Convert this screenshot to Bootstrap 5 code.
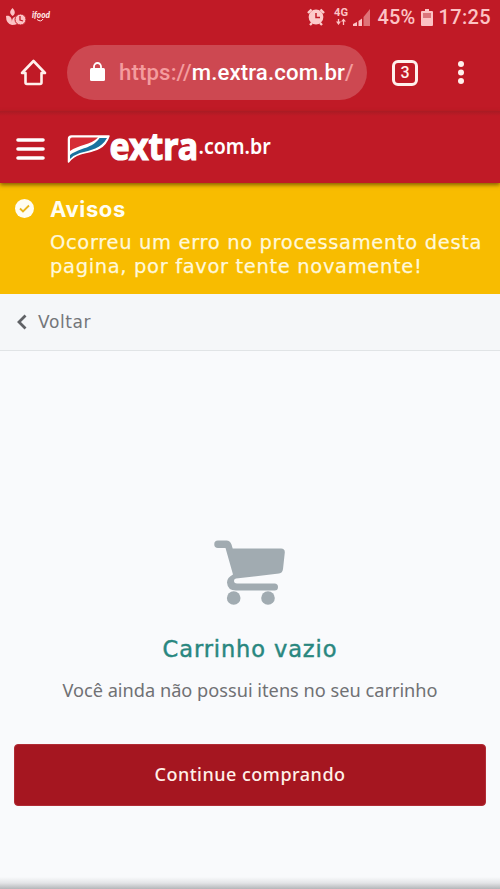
<!DOCTYPE html>
<html lang="pt-BR">
<head>
<meta charset="utf-8">
<meta name="viewport" content="width=device-width, initial-scale=1">
<title>Carrinho - Extra.com.br</title>
<link href="https://cdn.jsdelivr.net/npm/bootstrap@5.3.0/dist/css/bootstrap.min.css" rel="stylesheet">
<style>
  body { height: 889px; overflow: hidden; background: #f9fafc; font-family: Roboto, "Liberation Sans", sans-serif; }
  svg { display: block; flex: none; }
  .status-bar { height: 34px; background: #c01a26; color: #fcc3c4; padding: 0 9px 0 6px; font-size: 20px; line-height: 34px; font-weight: 500; }
  .net-type { margin-left: 8px; }
  .pct { margin-left: 6px; letter-spacing: .2px; }
  .batt { margin: 0 6px 0 5px; }
  .clock { letter-spacing: .35px; }
  .browser-bar { height: 77px; background: #c01a26; padding: 0 30px 0 20px; }
  .address { width: 300px; height: 55px; background: #cd4851; color: #fff; font-size: 22.2px; font-weight: 500; white-space: nowrap; margin-left: 20px; padding-left: 23px; margin-top: -1px; }
  .address .soft { color: #f49c9e; font-weight: 500; }
  .url { margin-left: 14px; padding-top: 1px; letter-spacing: .13px; }
  .tab-count { width: 26px; height: 26px; border: 3px solid #fff0ec; border-radius: 6px; color: #fff0ec; font-size: 16px; line-height: 20px; font-weight: 500; margin-left: 25px; }
  .site-header { height: 72px; background: linear-gradient(#a91b24, #c01a26 5px); box-shadow: 0 2px 4px rgba(70,45,0,.65); padding-left: 16px; z-index: 1; }
  .menu-icon { margin-top: 3px; }
  .logo { margin-left: 22px; margin-top: 4px; }
  .rounded-type { font-family: "DejaVu Sans", sans-serif; }
  .notice { height: 111px; background: #f8bc00; color: #fff8da; padding: 13px 0 0 15px; }
  .notice-icon { margin-right: 16px; margin-top: 3px; }
  .notice-title { font-family: Inter, sans-serif; font-size: 22px; line-height: 26px; font-weight: 700; color: #fffdf2; letter-spacing: .6px; }
  .notice-text { font-size: 19.500px; line-height: 24px; margin-top: 9px; white-space: nowrap; letter-spacing: .65px; -webkit-text-stroke: .25px; }
  .back-row { height: 57px; background: #f5f7f9; border-bottom: 1px solid #e1e4e6; color: #747679; padding-left: 17px; font-size: 17px; }
  .back-label { margin-left: 11px; letter-spacing: .6px; padding-top: 2px; }
  .empty-state { padding-top: 189px; }
  .empty-title { color: #29877f; font-size: 22.500px; line-height: 28px; margin-top: 29px; letter-spacing: .9px; -webkit-text-stroke: .45px; }
  .empty-text { color: #707174; font-family: "Noto Sans", sans-serif; font-size: 18.200px; line-height: 26px; margin-top: 14px; white-space: nowrap; }
  .btn-buy, .btn-buy:hover { height: 62px; margin: 41px 14px 0; padding-bottom: 7px; background: #a51620; border: 1px solid #b02b34; border-radius: 4px; color: #fff0e8; font-family: "Noto Sans", sans-serif; font-size: 18px; font-weight: 500; letter-spacing: .5px; }
  .bottom-shade { height: 12px; background: linear-gradient(rgba(160,163,166,0), rgba(160,163,166,.25) 50%, #b4b6b9); }
</style>
</head>
<body class="d-flex flex-column">
  <div class="status-bar d-flex align-items-center">
    <svg width="21" height="18" viewBox="0 0 21 18" fill="#fcc3c4"><path d="M6.500 0c-4 4-2 6 0 8 2-1 4-4 0-8ZM0 8c4-1 6 2 6 6 0-3 1-5 5-6v8q-2 1-5 1Q0 16 0 8Z"/><circle cx="14.500" cy="11.500" r="5.500" stroke="#c01a26"/><path d="M14 8v4l3 1" fill="none" stroke="#c01a26" stroke-width="1.300"/></svg>
    <svg class="ms-1" width="20" height="14" viewBox="0 0 20 14"><text x="1" y="8" textLength="18" lengthAdjust="spacingAndGlyphs" font-family="Lato" font-weight="900" font-style="italic" font-size="9" fill="#ffe5e4">ifood</text><path d="M6 9.500q4 3 6-.5" fill="none" stroke="#ffe5e4"/></svg>
    <div class="ms-auto d-flex align-items-center">
      <svg width="18" height="18" viewBox="0 0 18 18"><circle cx="9" cy="9" r="7.400" fill="#fccbca"/><path d="M1 5 4.500 1.500M17 5l-3.500-3.500M3 17l2-2M15 17l-2-2" stroke="#fccbca" stroke-width="2.400"/><path d="M9 5v4.500h4" fill="none" stroke="#c01a26" stroke-width="1.500"/></svg>
      <svg class="net-type" width="16" height="18" viewBox="0 0 16 18"><text x="1" y="8" textLength="14" lengthAdjust="spacingAndGlyphs" font-family="Roboto" font-weight="700" font-size="10" fill="#fcc3c4">4G</text><path d="M5.500 11v3M10.500 13v4" stroke="#fcc3c4" stroke-width="1.300"/><path d="m3 13.500h5L5.500 17ZM8 13.500h5L10.500 10.500Z" fill="#fcc3c4"/></svg>
      <svg class="ms-1" width="18" height="17" viewBox="0 0 18 17"><path d="M0 17v-2l4-2v4ZM5.500 17v-5L9 9.500V17Z" fill="#fcc3c4"/><path d="M10.500 17V8L17 0v17Z" fill="#df7378"/></svg>
      <span class="pct">45%</span>
      <svg class="batt" width="12" height="17" viewBox="0 0 12 17"><path d="M4 0h4v2h3q1 0 1 1v13q0 1-1 1H1q-1 0-1-1V3q0-1 1-1h3Z" fill="#fcc3c4"/><path d="M2 4h8v5H2Z" fill="#dc747a"/></svg>
      <span class="clock">17:25</span>
    </div>
  </div>
  <div class="browser-bar d-flex align-items-center">
    <svg width="27" height="27" viewBox="0 0 27 27" fill="none" stroke="#fff0ec" stroke-width="2.600" stroke-linejoin="round" stroke-linecap="round"><path d="M2 14 13.500 2 25 14h-3.500v9.500q0 1.500-1.500 1.500H7q-1.500 0-1.500-1.500V14Z"/></svg>
    <div class="address rounded-pill d-flex align-items-center">
      <svg width="15" height="20" viewBox="0 0 15 20"><rect y="6" width="15" height="13" rx="1.500" fill="#fff"/><path d="M4 7V4.500a3.500 3.500 0 0 1 7 0V7" fill="none" stroke="#fff" stroke-width="1.800"/></svg>
      <span class="url"><span class="soft">https://</span>m.extra.com.br<span class="soft">/</span></span>
    </div>
    <div class="tab-count text-center">3</div>
    <svg class="ms-auto" width="18" height="24" viewBox="0 0 18 24" fill="#fff0ec"><circle cx="9" cy="3" r="3"/><circle cx="9" cy="11.500" r="3"/><circle cx="9" cy="20" r="3"/></svg>
  </div>
  <header class="site-header d-flex align-items-center position-relative">
    <svg class="menu-icon" width="29" height="24" viewBox="0 0 29 24" stroke="#fff" stroke-width="3.600" stroke-linecap="round"><path d="M2 3h25M2 12h25M2 21h25"/></svg>
    <svg class="logo" width="230" height="64" viewBox="0 -14 230 64">
      <path d="M1.500 31V8Q1.500 5 4.500 5H42C37 20 24 20 13 23Q6 25 1.500 31Z" fill="#fff" stroke="#fff" stroke-width="1.500" stroke-linejoin="round"/>
      <path d="M3 20V8.500Q3 6.500 5 6.500H31C24 14 11 14 3 20Z" fill="#d62c35"/>
      <path d="M3 24C14 16 25 18 32.500 7H40C34 18 24 19 13 22Q7 24 3 28Z" fill="#19729f"/>
      <text transform="translate(42.500 28.500) scale(.915 1)" font-family="Noto Sans" font-weight="700" font-size="37" fill="#fff" stroke="#fff" stroke-width="1.200">extra</text>
      <text transform="translate(131.500 23) scale(.89 1)" font-family="Noto Sans" font-weight="600" font-size="22" fill="#fff">.com.br</text>
    </svg>
  </header>
  <div class="notice rounded-type d-flex">
    <svg class="notice-icon" width="19" height="19" viewBox="0 0 19 19"><circle cx="9.500" cy="9.500" r="9.500" fill="#fffdf2"/><path d="m5 9.500 3 3 6-6" fill="none" stroke="#e9b51d" stroke-width="1.800"/></svg>
    <div>
      <div class="notice-title">Avisos</div>
      <div class="notice-text">Ocorreu um erro no processamento desta<br>pagina, por favor tente novamente!</div>
    </div>
  </div>
  <div class="back-row rounded-type d-flex align-items-center">
    <svg width="10" height="16" viewBox="0 0 10 16" fill="none" stroke="#606266" stroke-width="2.800"><path d="M8.500 1.500 2 8l6.500 6.500"/></svg>
    <span class="back-label">Voltar</span>
  </div>
  <main class="empty-state flex-grow-1 d-flex flex-column">
    <svg class="mx-auto" width="72" height="66" viewBox="0 0 72 66" fill="#a1abb1"><path d="M4 .500h8.500q3.500 0 5 4l1.200 4H67q4 0 3.800 4L69 29q-.500 4-4 4.500L22 38.500q-2 .300-2 2.300 0 2.700 3 2.700H60.500a3.500 3.500 0 0 1 0 7H22q-8.500 0-9-8 0-5 6-8L11.500 8H4a3.700 3.700 0 0 1 0-7.500Z"/><circle cx="19.700" cy="58" r="6.800"/><circle cx="54" cy="58" r="6.800"/></svg>
    <div class="empty-title rounded-type text-center">Carrinho vazio</div>
    <div class="empty-text text-center">Você ainda não possui itens no seu carrinho</div>
    <button type="button" class="btn btn-buy">Continue comprando</button>
    <div class="bottom-shade mt-auto"></div>
  </main>
<script src="https://cdn.jsdelivr.net/npm/bootstrap@5.3.0/dist/js/bootstrap.bundle.min.js"></script>
</body>
</html>
